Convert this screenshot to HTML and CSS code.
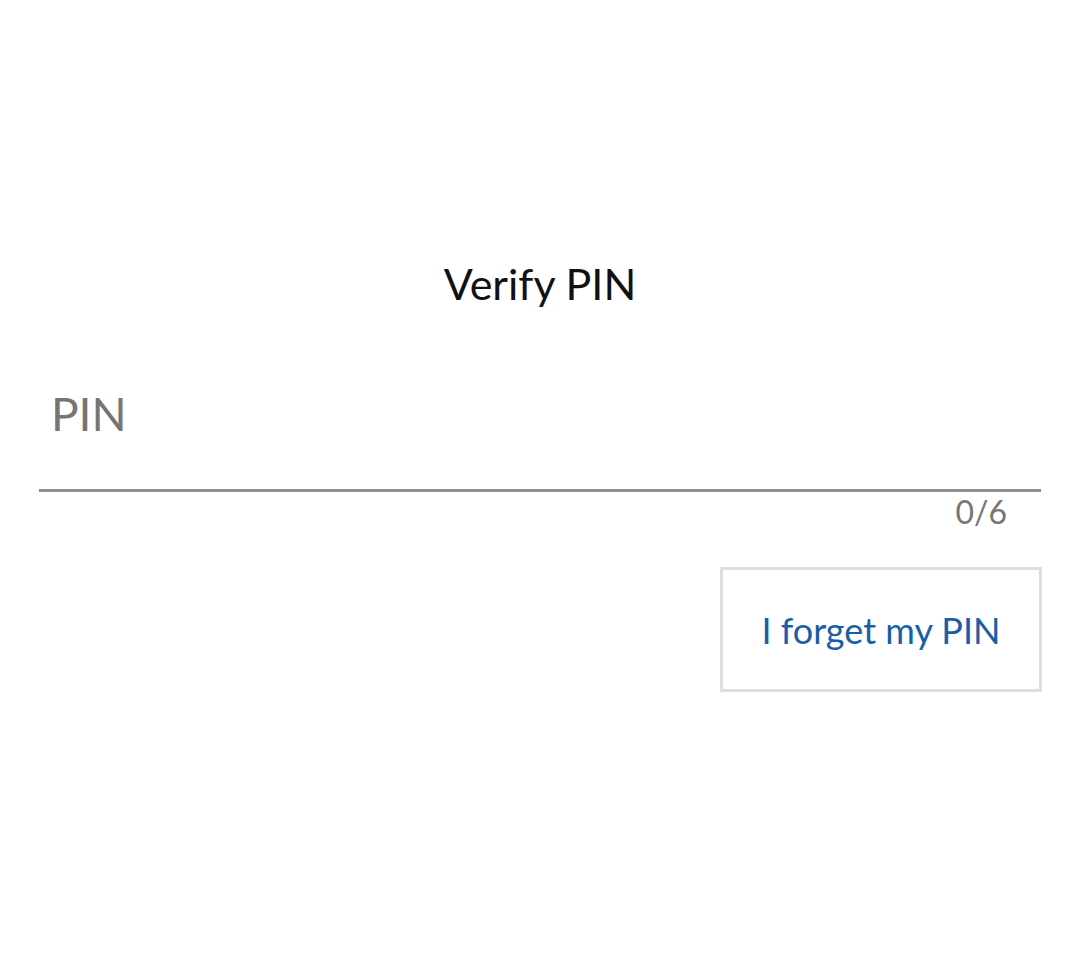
FILE: index.html
```html
<!DOCTYPE html>
<html lang="en">
<head>
    <meta charset="UTF-8">
    <title>Verify PIN</title>
    <link rel="stylesheet" href="styles.css">
</head>
<body>
    <div class="page">
        <h1 class="title">Verify PIN</h1>

        <div class="field">
            <input type="password" class="pin_input" placeholder="PIN" maxlength="6">
        </div>
        <div class="counter">0/6</div>

        <div class="actions">
            <button type="button" class="forget_btn">I forget my PIN</button>
        </div>
    </div>
</body>
</html>
```

FILE: styles.css
```css
body {
    margin: 0;
    background: #fff;
    font-family: Lato, "Open Sans", sans-serif;
}

.page {
    padding: 0 39px 0 39px;
}

.title {
    margin: 0;
    padding-top: 256px;
    height: 56px;
    font-size: 43px;
    font-weight: normal;
    line-height: 56px;
    text-align: center;
    color: #111;
}

.field {
    margin-top: 73px;
    border-bottom: 3px solid #8e8e8e;
}

.pin_input {
    display: block;
    width: 100%;
    box-sizing: border-box;
    height: 104px;
    padding: 0 0 47px 12px;
    border: none;
    outline: none;
    font-family: Lato, sans-serif;
    font-size: 46px;
    color: #333;
    background: transparent;
}

.pin_input::placeholder {
    color: #757575;
}

.counter {
    padding-right: 34px;
    height: 42px;
    line-height: 40px;
    font-size: 32px;
    text-align: right;
    color: #757575;
}

.actions {
    display: flex;
    justify-content: flex-end;
    margin-top: 33px;
    margin-right: -1px;
}

.forget_btn {
    width: 322px;
    height: 125px;
    background: #fff;
    border: 3px solid #dedede;
    font-family: Lato, sans-serif;
    font-size: 36px;
    color: #1a5fa5;
}
```
